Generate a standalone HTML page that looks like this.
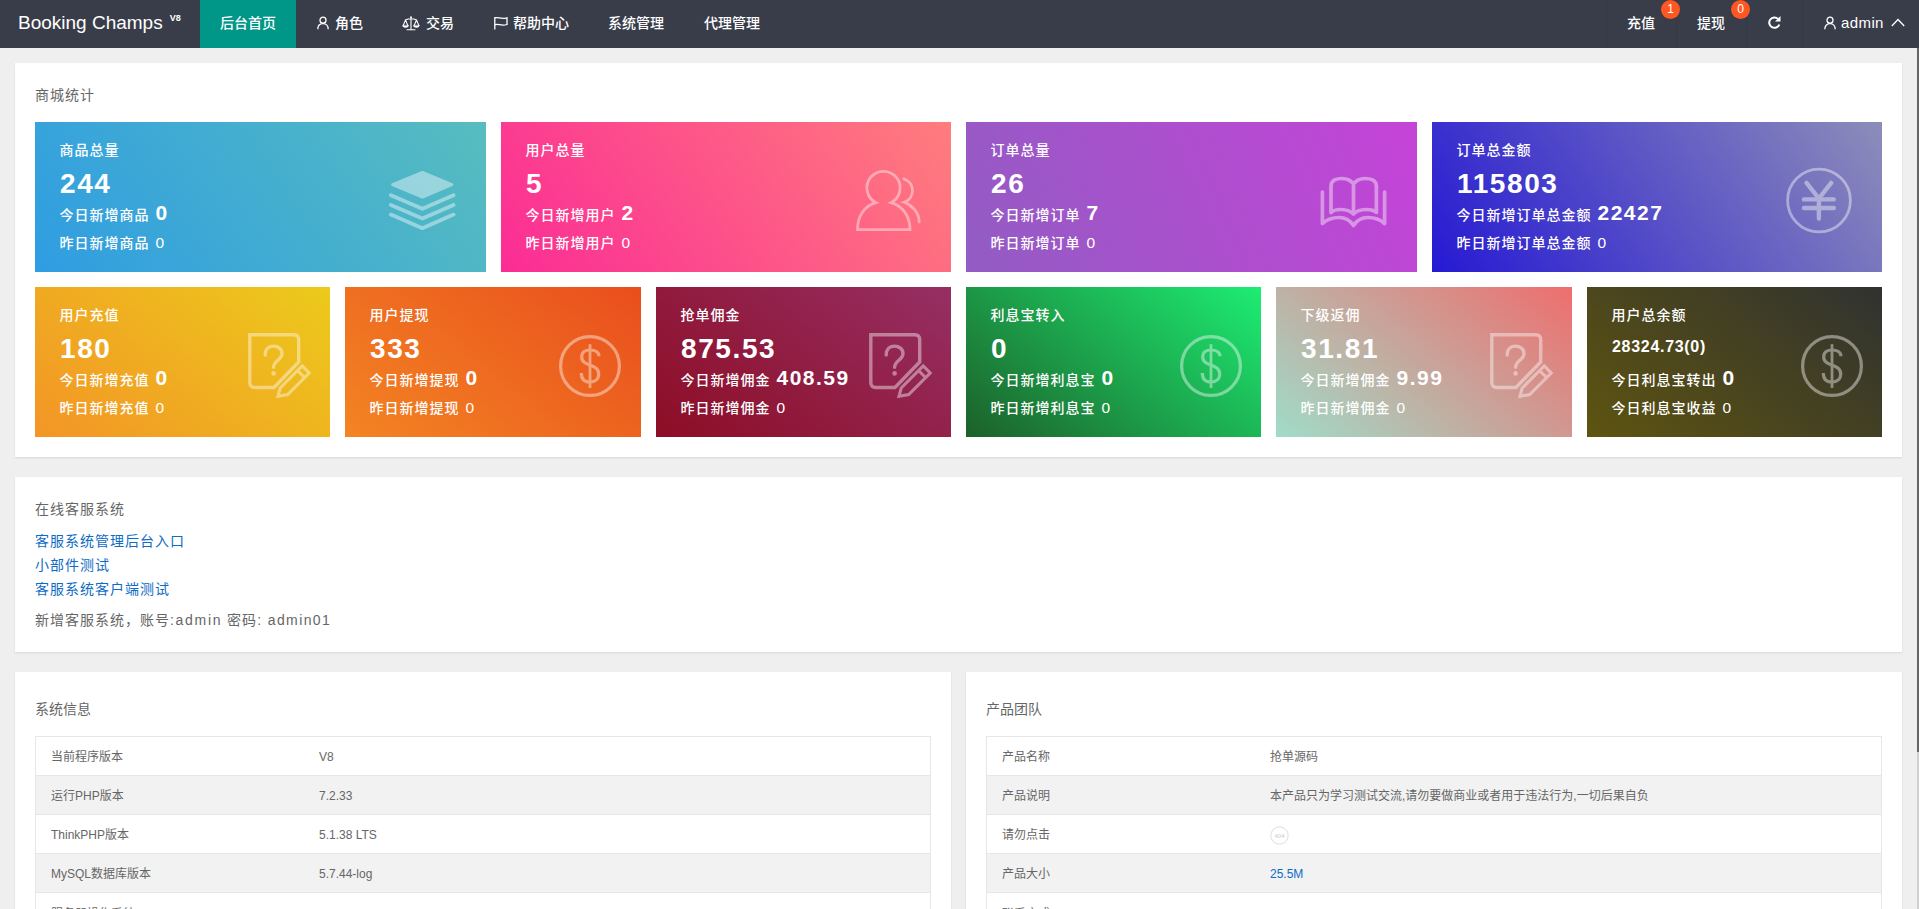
<!DOCTYPE html>
<html lang="zh-CN">
<head>
<meta charset="utf-8">
<title>Booking Champs</title>
<style>
*{box-sizing:border-box;margin:0;padding:0}
html,body{width:1919px;height:909px;overflow:hidden}
body{position:relative;background:#efefef;font-family:"Liberation Sans","Noto Sans CJK SC",sans-serif;font-size:14px;color:#666;line-height:24px}
a{text-decoration:none;color:#0e6cc4}
/* header */
.hd{position:absolute;left:0;top:0;width:1919px;height:48px;background:#393d49;color:#fff}
.logo{position:absolute;left:18px;top:0;height:48px;line-height:45px;font-size:19px;color:#fff;white-space:nowrap}
.logo sup{font-size:9px;font-weight:bold;position:relative;top:-8px;left:7px;vertical-align:baseline}
.nav{position:absolute;top:0;height:48px;line-height:46px;font-size:14px;color:#fff;white-space:nowrap;font-weight:500}
.nav.on{background:#009688;text-align:center}
.nav svg{vertical-align:middle;position:relative;top:-1px;margin-right:3px}
.rt{position:absolute;top:0;height:48px;line-height:46px;font-size:14px;color:#fff;white-space:nowrap;border-left:1px solid #343843;font-weight:500}
.bdg{position:absolute;z-index:3;top:0;width:19px;height:19px;border-radius:10px;background:#ff5722;color:#fff;font-size:12px;line-height:19px;text-align:center}
/* panels */
.pn{position:absolute;background:#fff;box-shadow:0 1px 2px 0 rgba(0,0,0,.1)}
.tt{position:absolute;left:20px;font-size:14px;color:#666;line-height:20px;white-space:nowrap}
/* stat cards */
.cd{position:absolute;height:150px;color:#fff;overflow:hidden;letter-spacing:1px;font-weight:500}
.cd .t{position:absolute;left:24.500px;top:18px;font-size:14px;line-height:20px;white-space:nowrap}
.cd .n{position:absolute;left:25px;top:45px;font-size:28px;line-height:34px;font-weight:bold;white-space:nowrap;letter-spacing:1.600px}
.cd .a{position:absolute;left:24.500px;top:76px;font-size:14px;line-height:30px;white-space:nowrap}
.cd .a b{font-size:21px;font-weight:bold;margin-left:6px;letter-spacing:1.500px}
.cd .b{position:absolute;left:24.500px;top:106px;font-size:14px;line-height:30px;white-space:nowrap}
.cd .b i{font-style:normal;font-size:15.500px;margin-left:6px}
.cd svg{position:absolute}
/* tables */
.tb{position:absolute;border:1px solid #e6e6e6;border-bottom:0;overflow:hidden}
.tr{position:relative;height:39px;border-bottom:1px solid #e6e6e6;font-size:12px;color:#666;line-height:40px;white-space:nowrap}
.tr.g{background:#f2f2f2}
.tr:last-child{line-height:43px}
.tr span{position:absolute;top:0}
.tr .k{left:15px}
.tr .v{left:283px}
</style>
</head>
<body>
<div class="hd">
<div class="logo">Booking Champs<sup>V8</sup></div>
<div class="nav on" style="left:200px;width:96px">后台首页</div>
<div class="nav" style="left:317px"><svg style="margin-right:6px" width="12" height="14" viewBox="0 0 12 14" fill="none" stroke="#fff" stroke-width="1.300"><circle cx="6" cy="4.200" r="3"/><path d="M0.800 13.300c0-3.300 2-5.700 5.200-5.700s5.200 2.400 5.200 5.700"/></svg>角色</div>
<div class="nav" style="left:402px"><svg style="margin-right:6px" width="18" height="15" viewBox="0 0 18 15" fill="none" stroke="#fff" stroke-width="1.100" stroke-linecap="round"><circle cx="9" cy="1.200" r=".9" fill="#fff" stroke="none"/><path d="M9 1.500v12M5 13.800h8M3.300 3.900Q9 1.500 14.700 3.900M3.500 4L1.100 9.600M3.500 4l2.400 5.600M14.500 4l-2.400 5.600M14.500 4l2.400 5.600"/><path d="M0.700 9.700a2.900 1.700 0 0 0 5.800 0zM11.500 9.700a2.900 1.700 0 0 0 5.800 0z" fill="#fff" stroke-width=".6"/></svg>交易</div>
<div class="nav" style="left:493px"><svg style="margin-right:4px" width="16" height="14" viewBox="0 0 16 14" fill="none" stroke="#fff" stroke-width="1.300"><path d="M1.800 1v12.400M1.800 2C5 .5 8 3.800 14 1.800V8.500C8 10.500 5 7.200 1.800 8.800"/></svg>帮助中心</div>
<div class="nav" style="left:608px">系统管理</div>
<div class="nav" style="left:704px">代理管理</div>
<div class="rt" style="left:1606px;width:70px;padding-left:20px">充值</div><div class="bdg" style="left:1661px">1</div>
<div class="rt" style="left:1676px;width:70px;padding-left:20px">提现</div><div class="bdg" style="left:1731px">0</div>
<div class="rt" style="left:1746px;width:56px"><svg style="position:absolute;left:20px;top:15px" width="15" height="15" viewBox="0 0 15 15" fill="none" stroke="#fff" stroke-width="2"><path d="M12.300 9.500a5.200 5.200 0 1 1-1.200-5.600"/><path d="M13.500 1v5.500H8z" fill="#fff" stroke="none"/></svg></div>
<div class="rt" style="left:1802px;width:117px;padding-left:21px"><svg style="vertical-align:middle;position:relative;top:-1px;margin-right:5px" width="12" height="14" viewBox="0 0 12 14" fill="none" stroke="#fff" stroke-width="1.300"><circle cx="6" cy="4.200" r="3"/><path d="M0.800 13.200c0-3.200 2-5.600 5.200-5.600s5.200 2.400 5.200 5.600"/></svg><span style="font-size:15px;letter-spacing:.4px">admin</span><svg style="position:absolute;left:88px;top:18px" width="14" height="9" viewBox="0 0 14 9" fill="none" stroke="#fff" stroke-width="1.300"><path d="M0.800 8L7 1.500 13.200 8"/></svg></div>
</div>
<div class="pn" style="left:15px;top:63px;width:1887px;height:394px"><div class="tt" style="top:22px;letter-spacing:1px">商城统计</div></div>
<div class="cd" style="left:35px;top:122px;width:451px;background:linear-gradient(-125deg,#57bdbf,#2f9de2)"><div class="t">商品总量</div><div class="n">244</div><div class="a">今日新增商品<b>0</b></div><div class="b">昨日新增商品<i>0</i></div><svg style="left:354px;top:48px" width="67" height="62" viewBox="0 0 67 62" opacity=".42"><path d="M33.400 2.500L62.800 14.600 33.400 27.200 3.600 14.600z" fill="#fff" stroke="#fff" stroke-width="3" stroke-linejoin="round"/><path d="M1.900 25.200L33.400 38.800 64.500 25.200M1.900 34.900L33.400 48.500 64.500 34.900M1.900 44.600L33.400 58.200 64.500 44.600" fill="none" stroke="#fff" stroke-width="3.800" stroke-linecap="round" stroke-linejoin="round"/></svg></div>
<div class="cd" style="left:501px;top:122px;width:450px;background:linear-gradient(-125deg,#ff7d7d,#fb2c95)"><div class="t">用户总量</div><div class="n">5</div><div class="a">今日新增用户<b>2</b></div><div class="b">昨日新增用户<i>0</i></div><svg style="left:353px;top:46px" width="68" height="64" viewBox="0 0 68 64" fill="none" stroke="#fff" stroke-width="2.800" opacity=".42" stroke-linecap="round"><path d="M22 34.700A16.600 16.600 0 1 1 37 34.700C49 38 56 48.500 56 61.600H3.500C3.500 48.500 10 38 22 34.700z" stroke-linejoin="miter"/><path d="M49.800 10.800A12.400 12.400 0 0 1 50.300 34.300C58.500 37.500 65.200 45 65.200 54"/></svg></div>
<div class="cd" style="left:966px;top:122px;width:451px;background:linear-gradient(-113deg,#c543d8,#925cc3)"><div class="t">订单总量</div><div class="n">26</div><div class="a">今日新增订单<b>7</b></div><div class="b">昨日新增订单<i>0</i></div><svg style="left:354px;top:54px" width="68" height="54" viewBox="0 0 68 54" fill="none" stroke="#fff" stroke-width="3.700" opacity=".42" stroke-linecap="round" stroke-linejoin="round"><path d="M11 36.500V10C11 4 17 2.500 22 2.500C27 2.500 31 4.500 33.500 8C36 4.500 40 2.500 45 2.500C50 2.500 56.400 4 56.400 10V36.500C52 32.500 40 32 33.500 38C27 32 15 32.500 11 36.500zM33.500 8V38"/><path d="M2.400 16V47.500C8 42.500 14 41.500 19 41.500C25 41.500 30 44 33.500 49.500C37 44 42 41.500 48 41.500C53 41.500 59 42.500 64.600 47.500V16"/></svg></div>
<div class="cd" style="left:1432px;top:122px;width:450px;background:linear-gradient(-125deg,#8d8db9,#2619d3)"><div class="t">订单总金额</div><div class="n">115803</div><div class="a">今日新增订单总金额<b>22427</b></div><div class="b">昨日新增订单总金额<i>0</i></div><svg style="left:354px;top:45px" width="67" height="68" viewBox="0 0 67 68" fill="none" stroke="#fff" opacity=".42" stroke-linecap="round" stroke-linejoin="round"><circle cx="33" cy="33.500" r="31.400" stroke-width="2.800"/><path d="M20.500 15.900L32.900 31.500 45.200 15.900M32.900 31.500V51.500M17.900 32.400H47.800M17.900 41H47.800" stroke-width="4.400"/></svg></div>
<div class="cd" style="left:35px;top:287px;width:295px;background:linear-gradient(-141deg,#ecca1b,#f39526)"><div class="t">用户充值</div><div class="n">180</div><div class="a">今日新增充值<b>0</b></div><div class="b">昨日新增充值<i>0</i></div><svg style="left:212px;top:44px" width="65" height="68" viewBox="0 0 65 68" fill="none" stroke="#fff" stroke-width="3.400" opacity=".42"><path d="M2.800 3.700H46.700Q51.700 3.700 51.700 8.700V31L27 56.500H7.800Q2.800 56.500 2.800 51.500Z" stroke-linejoin="miter"/><path d="M55.200 34.900L62.200 42 40.700 63.500 31 65.300 33.200 57ZM50.500 39.500L57.500 46.500" stroke-width="3.100" stroke-linejoin="miter"/><path d="M18.200 24C18.200 18.500 21.500 15.100 26.300 15.100S35 18 35 22.500C35 29 26.600 29.500 26.600 36.300" stroke-width="3.400" stroke-linecap="round"/><circle cx="26.600" cy="42.400" r="2.300" fill="#fff" stroke="none"/></svg></div>
<div class="cd" style="left:345px;top:287px;width:296px;background:linear-gradient(-141deg,#e94e1d,#f38423)"><div class="t">用户提现</div><div class="n">333</div><div class="a">今日新增提现<b>0</b></div><div class="b">昨日新增提现<i>0</i></div><svg style="left:213px;top:47px" width="64" height="64" viewBox="0 0 64 64" fill="none" stroke="#fff" opacity=".42"><circle cx="32" cy="32" r="29.400" stroke-width="3.200"/><path d="M32 10.200V53.900" stroke-width="2.800"/><path d="M41 22.300C41 18 37 16 32 16C27 16 23.700 18.500 23.700 23C23.700 33 40.700 29 40.700 40C40.700 45 37 48 32 48C26.500 48 23.300 45 23.300 39" stroke-width="3.200"/></svg></div>
<div class="cd" style="left:656px;top:287px;width:295px;background:linear-gradient(-141deg,#962f64,#8d0d25)"><div class="t">抢单佣金</div><div class="n">875.53</div><div class="a">今日新增佣金<b>408.59</b></div><div class="b">昨日新增佣金<i>0</i></div><svg style="left:212px;top:44px" width="65" height="68" viewBox="0 0 65 68" fill="none" stroke="#fff" stroke-width="3.400" opacity=".42"><path d="M2.800 3.700H46.700Q51.700 3.700 51.700 8.700V31L27 56.500H7.800Q2.800 56.500 2.800 51.500Z" stroke-linejoin="miter"/><path d="M55.200 34.900L62.200 42 40.700 63.500 31 65.300 33.200 57ZM50.500 39.500L57.500 46.500" stroke-width="3.100" stroke-linejoin="miter"/><path d="M18.200 24C18.200 18.500 21.500 15.100 26.300 15.100S35 18 35 22.500C35 29 26.600 29.500 26.600 36.300" stroke-width="3.400" stroke-linecap="round"/><circle cx="26.600" cy="42.400" r="2.300" fill="#fff" stroke="none"/></svg></div>
<div class="cd" style="left:966px;top:287px;width:295px;background:linear-gradient(-141deg,#1ded73,#1c6029)"><div class="t">利息宝转入</div><div class="n">0</div><div class="a">今日新增利息宝<b>0</b></div><div class="b">昨日新增利息宝<i>0</i></div><svg style="left:213px;top:47px" width="64" height="64" viewBox="0 0 64 64" fill="none" stroke="#fff" opacity=".42"><circle cx="32" cy="32" r="29.400" stroke-width="3.200"/><path d="M32 10.200V53.900" stroke-width="2.800"/><path d="M41 22.300C41 18 37 16 32 16C27 16 23.700 18.500 23.700 23C23.700 33 40.700 29 40.700 40C40.700 45 37 48 32 48C26.500 48 23.300 45 23.300 39" stroke-width="3.200"/></svg></div>
<div class="cd" style="left:1276px;top:287px;width:296px;background:linear-gradient(-141deg,#ee6e6e,#a0dcc8)"><div class="t">下级返佣</div><div class="n">31.81</div><div class="a">今日新增佣金<b>9.99</b></div><div class="b">昨日新增佣金<i>0</i></div><svg style="left:213px;top:44px" width="65" height="68" viewBox="0 0 65 68" fill="none" stroke="#fff" stroke-width="3.400" opacity=".42"><path d="M2.800 3.700H46.700Q51.700 3.700 51.700 8.700V31L27 56.500H7.800Q2.800 56.500 2.800 51.500Z" stroke-linejoin="miter"/><path d="M55.200 34.900L62.200 42 40.700 63.500 31 65.300 33.200 57ZM50.500 39.500L57.500 46.500" stroke-width="3.100" stroke-linejoin="miter"/><path d="M18.200 24C18.200 18.500 21.500 15.100 26.300 15.100S35 18 35 22.500C35 29 26.600 29.500 26.600 36.300" stroke-width="3.400" stroke-linecap="round"/><circle cx="26.600" cy="42.400" r="2.300" fill="#fff" stroke="none"/></svg></div>
<div class="cd" style="left:1587px;top:287px;width:295px;background:linear-gradient(-141deg,#303230,#5e5410)"><div class="t">用户总余额</div><div class="n" style="font-size:16px;letter-spacing:.7px;top:43px">28324.73(0)</div><div class="a">今日利息宝转出<b>0</b></div><div class="b">今日利息宝收益<i>0</i></div><svg style="left:213px;top:47px" width="64" height="64" viewBox="0 0 64 64" fill="none" stroke="#fff" opacity=".42"><circle cx="32" cy="32" r="29.400" stroke-width="3.200"/><path d="M32 10.200V53.900" stroke-width="2.800"/><path d="M41 22.300C41 18 37 16 32 16C27 16 23.700 18.500 23.700 23C23.700 33 40.700 29 40.700 40C40.700 45 37 48 32 48C26.500 48 23.300 45 23.300 39" stroke-width="3.200"/></svg></div>

<div class="pn" style="left:15px;top:477px;width:1887px;height:175px;letter-spacing:1px">
<div class="tt" style="top:22px">在线客服系统</div>
<div style="position:absolute;left:20px;top:52px;line-height:24px;white-space:nowrap"><a>客服系统管理后台入口</a><br><a>小部件测试</a><br><a>客服系统客户端测试</a></div>
<div style="position:absolute;left:20px;top:131px;line-height:24px;white-space:nowrap;color:#666">新增客服系统，账号<span style="letter-spacing:1.700px">:admin</span> 密码<span style="letter-spacing:1.400px">: admin01</span></div>
</div>

<div class="pn" style="left:15px;top:672px;width:936px;height:260px"><div class="tt" style="top:27px">系统信息</div></div>
<div class="tb" style="left:35px;top:736px;width:896px;height:200px"><div class="tr"><span class="k">当前程序版本</span><span class="v">V8</span></div><div class="tr g"><span class="k">运行PHP版本</span><span class="v">7.2.33</span></div><div class="tr"><span class="k">ThinkPHP版本</span><span class="v">5.1.38 LTS</span></div><div class="tr g"><span class="k">MySQL数据库版本</span><span class="v">5.7.44-log</span></div><div class="tr"><span class="k">服务器操作系统</span><span class="v">Linux</span></div></div>
<div class="pn" style="left:966px;top:672px;width:936px;height:260px"><div class="tt" style="top:27px">产品团队</div></div>
<div class="tb" style="left:986px;top:736px;width:896px;height:200px"><div class="tr"><span class="k">产品名称</span><span class="v">抢单源码</span></div><div class="tr g"><span class="k">产品说明</span><span class="v">本产品只为学习测试交流,请勿要做商业或者用于违法行为,一切后果自负</span></div><div class="tr"><span class="k">请勿点击</span><span class="v"><svg style="position:absolute;left:0;top:11px" width="19" height="19" viewBox="0 0 19 19"><circle cx="9.500" cy="9.500" r="8.700" fill="#fff" stroke="#ddd" stroke-width="1"/><text x="9.500" y="12" font-size="6" fill="#ccc" text-anchor="middle" font-family="Liberation Sans,sans-serif">404</text></svg></span></div><div class="tr g"><span class="k">产品大小</span><span class="v"><a>25.5M</a></span></div><div class="tr"><span class="k">联系方式</span><span class="v"><a>telegram</a></span></div></div>

<div style="position:absolute;left:1917px;top:48px;width:2px;height:861px;background:#d0d0d0"></div><div style="position:absolute;left:1917px;top:48px;width:2px;height:704px;background:#666"></div>
</body>
</html>
